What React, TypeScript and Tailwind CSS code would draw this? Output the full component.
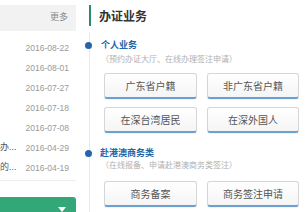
export default function App() {
  const rows: { label?: string; date: string }[] = [
    { date: "2016-08-22" },
    { date: "2016-08-01" },
    { date: "2016-07-27" },
    { date: "2016-07-18" },
    { date: "2016-07-08" },
    { label: "办...", date: "2016-04-29" },
    { label: "的...", date: "2016-04-19" },
  ];
  const btn =
    "h-[26px] flex items-center justify-center rounded-[3px] border border-[#d6d6d6] border-b-2 border-b-[#6d9fcf] bg-gradient-to-b from-white to-[#f5f5f5] text-[10px] text-[#555] shadow-[0_1px_1px_rgba(0,0,0,0.06)]";
  return (
    <div className="w-[308px] h-[212px] overflow-hidden bg-white flex font-['Liberation_Sans','Noto_Sans_CJK_SC',sans-serif]">
      <div className="w-[76px] shrink-0 flex flex-col pt-[5px]">
        <div className="h-[26px] bg-[#f2f2f2] flex items-center justify-end pr-[8px] text-[9px] text-[#888]">
          更多
        </div>
        <div className="mt-[7px] flex flex-col">
          {rows.map((r) => (
            <div
              key={r.date}
              className="h-[20px] flex items-center justify-between pr-[7px] text-[8.5px] text-[#9a9a9a]"
            >
              <span className="text-[9px] text-[#555]">{r.label ?? ""}</span>
              <span>{r.date}</span>
            </div>
          ))}
        </div>
        <div className="mt-[2px] border-t border-[#ececec]" />
        <div className="mt-[16px] flex-1 bg-[#33a777] rounded-tr-[3px] flex justify-end pr-[10px] pt-[10px]">
          <div className="w-0 h-0 border-l-[4px] border-r-[4px] border-t-[5px] border-l-transparent border-r-transparent border-t-white" />
        </div>
      </div>
      <div className="ml-[13px] flex-1 flex flex-col">
        <div className="mt-[5px] h-[21px] flex items-center">
          <div className="w-[2px] h-full bg-[#2e8b65]" />
          <div className="ml-[8px] text-[12px] font-bold text-[#333] font-['Noto_Sans_CJK_SC',sans-serif]">
            办证业务
          </div>
        </div>
        <div className="mt-[6px] border-l border-[#e8e8e8] flex-1 flex flex-col pl-[11px] font-['Noto_Sans_CJK_SC',sans-serif]">
          <div className="mt-[7px] relative h-[12px] flex items-center text-[9px] font-bold text-[#2466a8]">
            <span className="absolute -left-[16px] top-[2.5px] w-[7px] h-[7px] rounded-full bg-[#2466a8]" />
            个人业务
          </div>
          <div className="mt-[3px] h-[10px] flex items-center text-[8px] text-[#b0b0b0]">
            （预约办证大厅、在线办理签注申请）
          </div>
          <div className="mt-[9px] ml-[3px] flex gap-[10px]">
            <div className={`${btn} w-[93px]`}>广东省户籍</div>
            <div className={`${btn} w-[92px]`}>非广东省户籍</div>
          </div>
          <div className="mt-[8px] ml-[3px] flex gap-[10px]">
            <div className={`${btn} w-[93px]`}>在深台湾居民</div>
            <div className={`${btn} w-[92px]`}>在深外国人</div>
          </div>
          <div className="mt-[14px] relative h-[12px] flex items-center text-[9px] font-bold text-[#2466a8] -ml-[1px]">
            <span className="absolute -left-[15px] top-[2.5px] w-[7px] h-[7px] rounded-full bg-[#2466a8]" />
            赴港澳商务类
          </div>
          <div className="mt-[1px] h-[10px] flex items-center text-[8px] text-[#b0b0b0]">
            （在线报备、申请赴港澳商务类签注）
          </div>
          <div className="mt-[11px] ml-[3px] flex gap-[10px]">
            <div className={`${btn} w-[93px]`}>商务备案</div>
            <div className={`${btn} w-[92px]`}>商务签注申请</div>
          </div>
        </div>
      </div>
    </div>
  );
}
